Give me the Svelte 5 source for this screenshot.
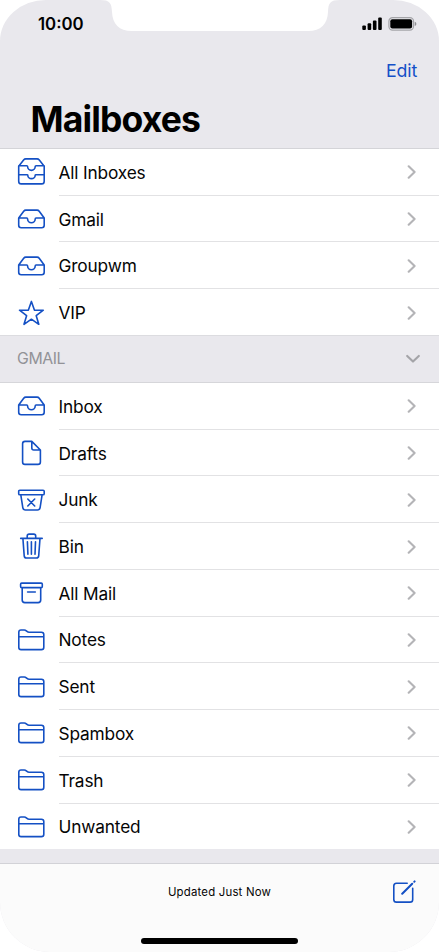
<script lang="ts">
	type Mailbox = { name: string; icon: string };

	const accounts: Mailbox[] = [
		{ name: 'All Inboxes', icon: 'stack' },
		{ name: 'Gmail', icon: 'tray' },
		{ name: 'Groupwm', icon: 'tray' },
		{ name: 'VIP', icon: 'star' }
	];
	const folders: Mailbox[] = [
		{ name: 'Inbox', icon: 'tray' },
		{ name: 'Drafts', icon: 'doc' },
		{ name: 'Junk', icon: 'junk' },
		{ name: 'Bin', icon: 'bin' },
		{ name: 'All Mail', icon: 'archive' },
		{ name: 'Notes', icon: 'folder' },
		{ name: 'Sent', icon: 'folder' },
		{ name: 'Spambox', icon: 'folder' },
		{ name: 'Trash', icon: 'folder' },
		{ name: 'Unwanted', icon: 'folder' }
	];

	// outlines on a 28 x 28 grid
	const icons: Record<string, string> = {
		stack:
			'M1.7 8.2 6.6 2Q7.5.9 8.9.9H20Q21.4.9 22.3 2L27.2 8.2V23.2Q27.2 25.9 24.7 25.9H4.2Q1.7 25.9 1.7 23.2ZM1.7 7.8H9.7Q10.6 7.8 10.6 8.6A3.8 3.8 0 0 0 18.2 8.6Q18.2 7.8 19.1 7.8H27.2M1.7 16.7H10Q10.8 16.7 10.8 17.2A3.7 3.4 0 0 0 18.2 17.2Q18.2 16.7 19 16.7H27.2',
		tray: 'M1.7 13 6.7 6.2Q7.5 5.1 8.9 5.1H20Q21.4 5.1 22.2 6.2L27.2 13V20.2Q27.2 22.7 24.7 22.7H4.2Q1.7 22.7 1.7 20.2ZM1.7 13H9.7Q10.6 13 10.6 13.9A3.8 3.8 0 0 0 18.2 13.9Q18.2 13 19.1 13H27.2',
		star: 'M14.4 2.4 17.4 11.1 26.3 11.2 19.2 16.7 21.8 25.3 14.4 20.2 7 25.3 9.6 16.7 2.5 11.2 11.4 11.1Z',
		doc: 'M8 2.4H14.8L23.4 11V22.9Q23.4 25.4 20.9 25.4H8Q5.6 25.4 5.6 22.9V4.8Q5.6 2.4 8 2.4ZM14.8 2.4V9Q14.8 11 16.8 11H23.4',
		junk: 'M2.8 4.2H26.1Q27.2 4.2 27.2 5.3V7.7Q27.2 8.8 26.1 8.8H2.8Q1.7 8.8 1.7 7.7V5.3Q1.7 4.2 2.8 4.2ZM3.8 8.8 5.8 21.7Q6.2 24 8.5 24H20.4Q22.7 24 23.1 21.7L25.1 8.8M10.8 13 17.7 20M17.7 13 10.8 20',
		bin: 'M3.7 5.4H25.2M10.2 5.4V3Q10.2 1.1 12.1 1.1H16.8Q18.7 1.1 18.7 3V5.4M5.9 5.4 7.2 22.9Q7.4 25 9.5 25H19.4Q21.5 25 21.7 22.9L23 5.4M10.4 8.8 10.9 21.2M14.4 8.8V21.2M18.5 8.8 18 21.2',
		archive:
			'M4.7 4.1H24.2Q25.3 4.1 25.3 5.2V7.5Q25.3 8.6 24.2 8.6H4.7Q3.6 8.6 3.6 7.5V5.2Q3.6 4.1 4.7 4.1ZM5.2 8.6V21Q5.2 23.6 7.8 23.6H21.1Q23.7 23.6 23.7 21V8.6M10.6 13H18.3',
		folder:
			'M1.8 21.4V6.2Q1.8 4 4 4H7.2Q8.4 4 9.3 4.8L10 5.4Q10.9 6.2 12.1 6.2H24.4Q26.8 6.2 26.8 8.6V21.2Q26.8 23.6 24.4 23.6H4.1Q1.8 23.6 1.8 21.4ZM1.8 10.8H26.8'
	};
</script>

{#snippet row(box: Mailbox)}
	<li>
		<svg class="icon" viewBox="0 0 28 28"><path d={icons[box.icon]} /></svg>
		<div class="cell">
			<span>{box.name}</span>
			<svg class="chevron" viewBox="0 0 10 14"><path d="M1.7 1.3 7.6 7 1.7 12.7" /></svg>
		</div>
	</li>
{/snippet}

<div class="phone">
	<header>
		<svg class="notch" viewBox="0 0 240 32">
			<path d="M0 0C10 0 11.5 3 12 12C12.5 24 19 31 32 31H208C221 31 227.5 24 228 12C228.3 3 230 0 240 0Z" />
		</svg>
		<div class="status">
			<span class="time">10:00</span>
			<svg class="signals" viewBox="0 0 56 14">
				<rect x="0.3" y="8.4" width="3.6" height="4.6" rx="1" />
				<rect x="5.6" y="6.2" width="3.6" height="6.8" rx="1" />
				<rect x="10.9" y="3.6" width="3.6" height="9.4" rx="1" />
				<rect x="16.2" y="0.6" width="3.6" height="12.4" rx="1" />
				<rect class="shell" x="26.9" y="0.7" width="24.6" height="12.4" rx="3.6" />
				<rect x="28.3" y="2.2" width="21.8" height="9.4" rx="2" />
				<path class="cap" d="M52.7 4.8Q54.4 5.4 54.4 6.9Q54.4 8.4 52.7 9Z" />
			</svg>
		</div>
		<div class="nav"><button>Edit</button></div>
		<h1>Mailboxes</h1>
	</header>

	<ul>
		{#each accounts as box}
			{@render row(box)}
		{/each}
	</ul>

	<div class="section">
		<span>GMAIL</span>
		<svg viewBox="0 0 14 10"><path d="M1.2 1.9 7 7.6 12.8 1.9" /></svg>
	</div>

	<ul>
		{#each folders as box}
			{@render row(box)}
		{/each}
	</ul>

	<footer>
		<span class="updated">Updated Just Now</span>
		<svg class="compose" viewBox="0 0 24 24">
			<path d="M15.2 3.2H4.5Q1.8 3.2 1.8 5.9V19.4Q1.8 22.1 4.5 22.1H18Q20.7 22.1 20.7 19.4V8.2" />
			<path class="pen" d="M10.2 13.8 20.2 3.8M22.3 1.7 22.6 1.4" />
		</svg>
		<div class="home"></div>
	</footer>
</div>

<style>
	:global(body) {
		margin: 0;
		background: #fff;
	}
	.phone {
		display: flex;
		flex-direction: column;
		width: 439px;
		height: 952px;
		overflow: hidden;
		border-radius: 46px 46px 50px 50px / 41px 41px 50px 50px;
		background: #e9e8ed;
		color: #050505;
		font-family: Inter, 'Liberation Sans', sans-serif;
	}
	header {
		position: relative;
		box-sizing: border-box;
		height: 149px;
		border-bottom: 1px solid #d4d4d8;
	}
	.notch {
		position: absolute;
		top: 0;
		left: 99.5px;
		width: 240px;
		height: 32px;
		fill: #fff;
	}
	.status {
		display: flex;
		justify-content: space-between;
		align-items: center;
		height: 48px;
		padding: 0 21px 0 38px;
	}
	.time {
		font-size: 16.8px;
		font-weight: 600;
		color: #000;
	}
	.signals {
		width: 56px;
		height: 14px;
	}
	.shell {
		fill: none;
		stroke: #a5a5a9;
		stroke-width: 1.2;
	}
	.cap {
		fill: #8f8f93;
	}
	.nav {
		display: flex;
		justify-content: flex-end;
		align-items: center;
		height: 45px;
		padding-right: 22px;
	}
	button {
		padding: 0;
		border: 0;
		background: none;
		color: #1450c8;
		font: inherit;
		font-size: 17.8px;
		letter-spacing: -0.2px;
	}
	h1 {
		margin: 5px 0 0 30.5px;
		color: #000;
		font-size: 35.5px;
		font-weight: 700;
		line-height: 44px;
		letter-spacing: -0.85px;
	}
	ul {
		margin: 0;
		padding: 0;
		list-style: none;
		background: #fff;
	}
	li {
		display: flex;
		align-items: center;
		height: 46.74px;
		padding-left: 17px;
	}
	.icon {
		flex: none;
		width: 28px;
		height: 28px;
		margin-right: 13.5px;
	}
	svg path {
		stroke-linecap: round;
		stroke-linejoin: round;
	}
	.icon path,
	.compose path {
		fill: none;
		stroke: #1450c4;
		stroke-width: 1.6;
	}
	.cell {
		display: flex;
		flex: 1;
		justify-content: space-between;
		align-items: center;
		box-sizing: border-box;
		height: 100%;
		padding: 1px 22px 0 0;
		border-bottom: 1px solid #e2e2e4;
		font-size: 17.3px;
		letter-spacing: -0.16px;
	}
	li:last-child {
		margin-bottom: -1px;
	}
	li:last-child .cell {
		border-bottom-color: transparent;
	}
	.chevron {
		width: 10px;
		height: 14px;
	}
	.chevron path,
	.section path {
		fill: none;
		stroke: #b4b4b7;
		stroke-width: 2.1;
	}
	.section {
		position: relative;
		display: flex;
		justify-content: space-between;
		align-items: center;
		box-sizing: border-box;
		height: 48px;
		padding: 0 19.5px 0 17px;
		border-top: 1px solid #dcdce0;
		border-bottom: 1px solid #d6d6da;
		background: #e9e8ed;
		color: #929297;
		font-size: 15.8px;
		letter-spacing: -0.4px;
	}
	.section svg {
		width: 14px;
		height: 10px;
	}
	.section path {
		stroke: #a4a4a8;
	}
	footer {
		position: relative;
		display: flex;
		justify-content: center;
		box-sizing: border-box;
		height: 89px;
		margin-top: auto;
		border-top: 1px solid #d2d2d7;
		background: #fbfbfb;
	}
	.updated {
		margin-top: 19px;
		font-size: 11.4px;
		line-height: 18px;
		letter-spacing: 0.2px;
	}
	.compose {
		position: absolute;
		top: 15.5px;
		right: 23px;
		width: 24px;
		height: 24px;
	}
	.compose .pen {
		stroke-width: 2;
	}
	.home {
		position: absolute;
		bottom: 8.5px;
		left: 141px;
		width: 157px;
		height: 5.5px;
		border-radius: 3px;
		background: #000;
	}
</style>
